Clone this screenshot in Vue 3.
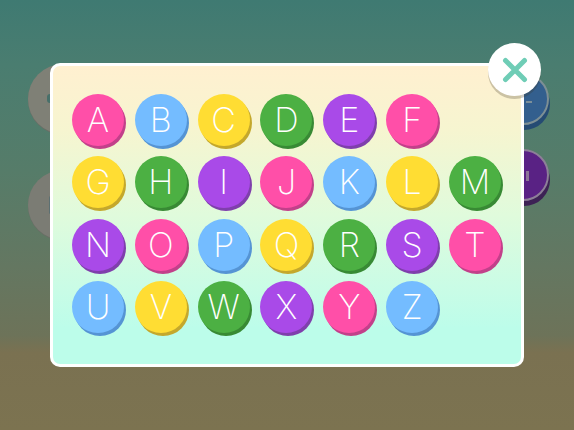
<script setup>
const colors = { p: 'pink', b: 'blue', y: 'yellow', g: 'green', v: 'purple' }
const rows = [
  [['A', 'p'], ['B', 'b'], ['C', 'y'], ['D', 'g'], ['E', 'v'], ['F', 'p']],
  [['G', 'y'], ['H', 'g'], ['I', 'v'], ['J', 'p'], ['K', 'b'], ['L', 'y'], ['M', 'g']],
  [['N', 'v'], ['O', 'p'], ['P', 'b'], ['Q', 'y'], ['R', 'g'], ['S', 'v'], ['T', 'p']],
  [['U', 'b'], ['V', 'y'], ['W', 'g'], ['X', 'v'], ['Y', 'p'], ['Z', 'b']],
].map((row) => row.map(([letter, c]) => ({ letter, color: colors[c] })))
</script>

<template>
  <div class="page">
    <div class="back back-gray back-1"><span class="dot"></span></div>
    <div class="back back-gray back-2"><span class="dot"></span></div>
    <div class="back back-ring back-blue"><span class="dash"></span></div>
    <div class="back back-ring back-purple"><span class="dash"></span></div>

    <div class="modal">
      <div v-for="(row, i) in rows" :key="i" class="row">
        <div v-for="item in row" :key="item.letter" class="ball" :class="item.color">{{ item.letter }}</div>
      </div>
      <button class="close" aria-label="Close">
        <svg width="26" height="26" viewBox="0 0 26 26">
          <path d="M3.5 3.5 L22.5 22.5 M22.5 3.5 L3.5 22.5" stroke="#6fcdb6" stroke-width="5" stroke-linecap="round" fill="none" />
        </svg>
      </button>
    </div>
  </div>
</template>

<style scoped>
.page {
  position: relative;
  width: 574px;
  height: 430px;
  overflow: hidden;
  padding: 63px 0 0 50px;
  box-sizing: border-box;
  background: linear-gradient(180deg, #3f7a72 0%, #4a7d70 15%, #567c69 40%, #647761 62%, #6d7359 78%, #7a7151 82%, #7c7350 100%);
  font-family: Inter, "Liberation Sans", sans-serif;
}
.back {
  position: absolute;
  border-radius: 50%;
  box-sizing: border-box;
}
.back-gray {
  left: 28px;
  width: 70px;
  height: 70px;
  background: #7f8076;
  box-shadow: 0 1px 0 #6a6e66;
}
.back-1 { top: 64px; }
.back-2 { top: 170px; background: #7b7c74; }
.dot {
  position: absolute;
  left: 19px;
  top: 30px;
  width: 6px;
  height: 9px;
  border-radius: 3px;
  background: #48706a;
}
.back-2 .dot { left: 21px; top: 26px; width: 3px; height: 18px; background: #5c7072; }
.back-ring {
  left: 497px;
  width: 52px;
  height: 52px;
  border: 2px solid #8a8f96;
}
.back-blue {
  top: 73px;
  background: #335f8e;
  border-color: #7d8f94;
  box-shadow: 1px 5px 0 #254b73;
}
.back-purple {
  top: 149px;
  background: #592284;
  border-color: #8d7f98;
  box-shadow: 1px 5px 0 #3d2255;
}
.dash {
  position: absolute;
  left: 27px;
  top: 26px;
  width: 6px;
  height: 2px;
  background: #7c8f99;
}
.back-purple .dash { top: 20px; height: 10px; width: 3px; background: #8c7598; }
.modal {
  position: relative;
  width: 474px;
  box-sizing: border-box;
  padding: 28px 16px 31px 19px;
  border: 3px solid #fff;
  border-radius: 10px;
  display: flex;
  flex-direction: column;
  gap: 10.33px;
  background: linear-gradient(180deg, #fff0d0 0%, #f6f5d0 22%, #e0fbdc 50%, #c9fce6 75%, #bcfdea 88%, #bcfdea 100%);
}
.row {
  display: flex;
  gap: 10.83px;
}
.ball {
  width: 52px;
  height: 52px;
  flex: none;
  border-radius: 50%;
  display: flex;
  align-items: center;
  justify-content: center;
  color: #fff;
  font-size: 34px;
  font-weight: 200;
  line-height: 1;
}
.pink { background: #ff4fa8; box-shadow: 2px 3px 0 #c2408a; }
.blue { background: #74bcff; box-shadow: 2px 3px 0 #5594d4; }
.yellow { background: #ffdd33; box-shadow: 2px 3px 0 #c4a82c; }
.green { background: #4cb043; box-shadow: 2px 3px 0 #388a34; }
.purple { background: #a94ae8; box-shadow: 2px 3px 0 #7f3fac; }
.close {
  position: absolute;
  left: 435px;
  top: -23px;
  width: 53px;
  height: 53px;
  padding: 0;
  border: 0;
  border-radius: 50%;
  background: #fff;
  box-shadow: 0 3px 0 rgba(60, 50, 30, 0.25);
  display: flex;
  align-items: center;
  justify-content: center;
}
</style>
